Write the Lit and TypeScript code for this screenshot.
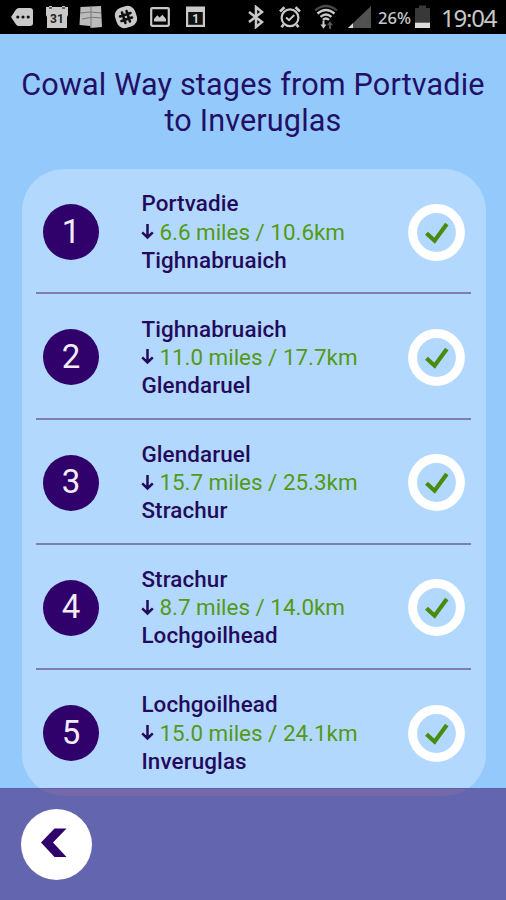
import { LitElement, html, css } from "lit";
import { customElement, property } from "lit/decorators.js";

interface Stage { from: string; to: string; distance: string; }

const STAGES: Stage[] = [
  { from: "Portvadie", to: "Tighnabruaich", distance: "6.6 miles / 10.6km" },
  { from: "Tighnabruaich", to: "Glendaruel", distance: "11.0 miles / 17.7km" },
  { from: "Glendaruel", to: "Strachur", distance: "15.7 miles / 25.3km" },
  { from: "Strachur", to: "Lochgoilhead", distance: "8.7 miles / 14.0km" },
  { from: "Lochgoilhead", to: "Inveruglas", distance: "15.0 miles / 24.1km" },
];

@customElement("status-bar")
class StatusBar extends LitElement {
  static styles = css`
    :host { display: flex; height: 34px; background: #000; box-sizing: border-box; align-items: center;
      padding: 0 10px 0 10px; font-family: Roboto, sans-serif; color: #c9c9c9; }
    svg { display: block; flex: none; }
    .notices { display: flex; gap: 10.5px; }
    .system { display: flex; align-items: center; margin-left: auto; }
    .bt { margin-right: 14px; }
    .alarm { margin-right: 13px; }
    .wifi { margin-right: 10px; }
    .signal { margin-right: 8px; }
    .percent { font: 500 16.5px/34px "Noto Sans", sans-serif; width: 36px; white-space: nowrap; letter-spacing: 0; padding-top: 2px; margin-left: -1px; }
    .battery { margin-right: 10px; }
    .clock { font: 400 24px/34px "Noto Sans", sans-serif; width: 55px; white-space: nowrap; letter-spacing: -1.2px; padding-top: 2px; }
    .day { font: 700 12px Roboto, sans-serif; }
  `;
  render() {
    return html`
      <div class="notices">
        <svg width="24" height="24" viewBox="0 0 24 24"><path d="M1 12 L6 4.5 Q7 3 9 3 H20 Q23 3 23 6 V18 Q23 21 20 21 H9 Q7 21 6 19.5Z" fill="#c9c9c9"/><g fill="#111"><circle cx="7.8" cy="12" r="1.6"/><circle cx="13" cy="12" r="1.6"/><circle cx="18.2" cy="12" r="1.6"/></g></svg>
        <svg width="24" height="24" viewBox="0 0 24 24"><path d="M1 2 H4 V1 H7 V2 H17 V1 H20 V2 H23 V10 L22 12 V23 H2 V12 L1 10Z" fill="#c9c9c9"/><path d="M4 3h3M17 3h3" stroke="#444" stroke-width="1.3"/><text class="day" x="12" y="18" text-anchor="middle" fill="#222">31</text></svg>
        <svg width="24" height="24" viewBox="0 0 24 24"><path d="M1.5 2 L22 1 L23 22 L12 23 L11 21 L.5 20Z" fill="#bcbcbc"/><path d="M1 8 Q11 6 22 8M3 14 Q12 11 23 13M12 1V23" stroke="#777" fill="none"/></svg>
        <svg width="24" height="24" viewBox="0 0 24 24"><g transform="rotate(-18 12 12)"><rect x="1.5" y="1.5" width="21" height="21" rx="8" fill="#c9c9c9"/><path d="M9.6 6.5V17.5M14.4 6.5V17.5M6.5 9.6H17.5M6.5 14.4H17.5" stroke="#111" stroke-width="2.6" stroke-linecap="round"/></g></svg>
        <svg width="24" height="24" viewBox="0 0 24 24"><rect x="3.2" y="3.2" width="17.6" height="17.6" rx="1" fill="none" stroke="#c9c9c9" stroke-width="2.2"/><path d="M6 16.5 V14 L9.3 10.2 L11.5 12.5 L14.5 9.7 L18 14 V16.5Z" fill="#c9c9c9"/></svg>
        <svg width="24" height="24" viewBox="0 0 24 24"><path d="M3 1.5 H22 V22 H3Z" fill="#c9c9c9"/><path d="M5.2 7 H19.8 V19.8 H5.2Z" fill="#111"/><text class="day" x="12.7" y="17.6" text-anchor="middle" fill="#ddd">1</text></svg>
      </div>
      <div class="system">
        <svg class="bt" width="18" height="24" viewBox="0 0 18 24"><path d="M2 7 L15 17 L9 22 V2 L15 7 L2 17" fill="none" stroke="#c9c9c9" stroke-width="2.5"/></svg>
        <svg class="alarm" width="22" height="24" viewBox="0 0 22 24"><circle cx="11" cy="12.8" r="8.4" fill="none" stroke="#c9c9c9" stroke-width="2.2"/><path d="M1 6.5 L5.5 2.2M21 6.5 L16.5 2.2M4.5 19.5 L2.5 22.3M17.5 19.5 L19.5 22.3" stroke="#c9c9c9" stroke-width="2.6"/><path d="M7 12.5 L10 15.2 L15.3 10" fill="none" stroke="#c9c9c9" stroke-width="2"/></svg>
        <svg class="wifi" width="24" height="26" viewBox="0 0 24 26"><path d="M1 6.5 Q12 -2.5 23 6.5" fill="none" stroke="#4a4a4a" stroke-width="2.2"/><g fill="none" stroke="#c9c9c9" stroke-width="2.4"><path d="M3.5 9.5 Q12 2.5 20.5 9.5M6.5 12.8 Q12 8 17.5 12.8M9 15.9 Q12 13.2 15 15.9"/></g><path d="M9.5 16.5V21" stroke="#c9c9c9" stroke-width="2"/><path d="M6.5 20.5H12.5L9.5 24.8Z" fill="#c9c9c9"/><path d="M16 25V20" stroke="#555" stroke-width="2"/><path d="M13 21.2H19L16 17Z" fill="#555"/></svg>
        <svg class="signal" width="23" height="24" viewBox="0 0 23 24"><path d="M0 23 L23 1 V23Z" fill="#515151"/><path d="M0 23 L5 18.3 V23Z" fill="#ddd"/></svg>
        <span class="percent">26%</span>
        <svg class="battery" width="17" height="24" viewBox="0 0 17 24"><path d="M1 3 H5 V.5 H12 V3 H16 V23 H1Z" fill="#383838"/><path d="M1 17.7H16V23H1Z" fill="#dcdcdc"/></svg>
        <span class="clock">19:04</span>
      </div>`;
  }
}

@customElement("stage-row")
class StageRow extends LitElement {
  @property({ attribute: false }) stage!: Stage;
  @property({ type: Number }) number = 1;
  static styles = css`
    :host { display: grid; grid-template-columns: 98.4px 1fr 57px; align-items: center; height: 125.25px;
      box-sizing: border-box; margin: 0 15px 0 14px; padding: 3px 6.5px 0 7px; border-bottom: 2px solid #7f7eb0; }
    :host(:last-child) { border-bottom-color: transparent; }
    .badge { width: 56px; height: 56px; border-radius: 50%; background: #30006b; color: #f3eafa;
      display: flex; align-items: center; justify-content: center; font: 400 33px/56px Roboto, sans-serif; box-sizing: border-box; padding-bottom: 1px; }
    .text { font: 500 22.4px/28.1px Roboto, sans-serif; color: #240a5c; white-space: nowrap; letter-spacing: 0.12px; padding-bottom: 1px; }
    .distance { display: flex; align-items: center; font-weight: 400; color: #529a17; gap: 5px; letter-spacing: 0; }
    .distance svg { flex: none; }
    .check { display: block; }
  `;
  render() {
    return html`
      <div class="badge">${this.number}</div>
      <div class="text">
        <div>${this.stage.from}</div>
        <div class="distance">
          <svg width="13" height="17" viewBox="0 0 13 17"><path d="M6.5 1 V14M1.2 9.3 L6.5 14.4 L11.8 9.3" fill="none" stroke="#240a5c" stroke-width="2.5"/></svg>
          <span>${this.stage.distance}</span>
        </div>
        <div>${this.stage.to}</div>
      </div>
      <svg class="check" width="57" height="57" viewBox="0 0 57 57"><circle cx="28.5" cy="28.5" r="23.9" fill="none" stroke="#fff" stroke-width="9"/><path d="M18.5 29.2 L26.6 36.7 L38.8 20" fill="none" stroke="#498b0c" stroke-width="4.2"/></svg>`;
  }
}

@customElement("app-root")
class AppRoot extends LitElement {
  static styles = css`
    :host { display: flex; flex-direction: column; height: 900px; overflow: hidden; background: #94cafb; font-family: Roboto, sans-serif; }
    .title { margin: 0; padding-top: 32.5px; height: 135px; box-sizing: border-box; text-align: center;
      font: 400 30.6px/36.5px Roboto, sans-serif; letter-spacing: 0.15px; color: #240f66; white-space: nowrap; }
    .card { margin: 0 20px 0 22px; height: 627px; flex: none; border-radius: 42px; background: #b2d9fd; }
    .footer { position: relative; flex: none; height: 112px; margin-top: -8px; background: #6366af; overflow: hidden;
      border-top: 1px solid #5a62ad; box-sizing: border-box; padding: 20px 0 0 21px; }
    .tint { position: absolute; left: 22px; right: 20px; bottom: 104px; height: 627px; border-radius: 42px; background: #7669aa; }
    .back { position: relative; display: block; width: 71px; height: 71px; padding: 0; border: 0; border-radius: 50%; background: #fff; }
    .back svg { display: block; }
  `;
  render() {
    return html`
      <status-bar></status-bar>
      <h1 class="title">Cowal Way stages from Portvadie<br>to Inveruglas</h1>
      <div class="card">${STAGES.map((s, i) => html`<stage-row .stage=${s} .number=${i + 1}></stage-row>`)}</div>
      <div class="footer">
        <div class="tint"></div>
        <button class="back" aria-label="Back">
          <svg width="71" height="71" viewBox="0 0 71 71"><path d="M20 33.5 L33.5 19.5 H45.5 L32 33.5 L45.5 48 H33.5Z" fill="#30006b"/></svg>
        </button>
      </div>`;
  }
}
